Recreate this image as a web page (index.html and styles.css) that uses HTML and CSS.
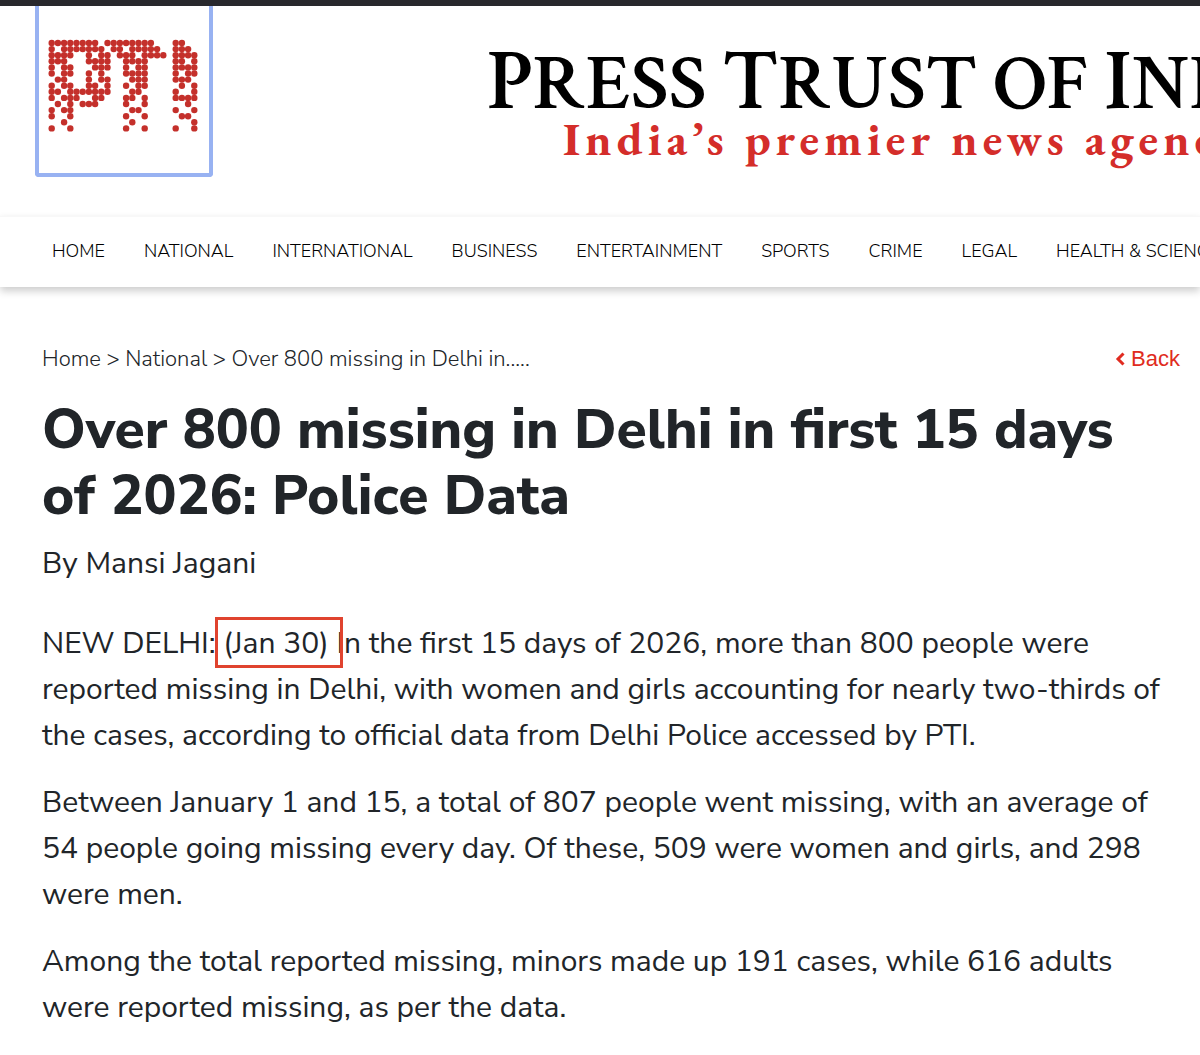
FILE: index.html
```html
<!DOCTYPE html>
<html lang="en">
<head>
    <meta charset="UTF-8">
    <meta name="viewport" content="width=device-width, initial-scale=1.0">
    <title>Over 800 missing in Delhi in first 15 days of 2026: Police Data</title>
    <link rel="stylesheet" href="styles.css">
</head>
<body>
    <header>
        <a href="#" class="logo" aria-label="PTI home">
            <svg id="logoDots" viewBox="0 0 150 94" width="150" height="94"></svg>
        </a>
        <div class="masthead">
            <div class="title"><span>P</span>RESS <span>T</span>RUST OF <span>I</span>NDIA</div>
            <div class="tagline">India’s premier news agency</div>
        </div>
    </header>

    <nav>
        <ul>
            <li><a href="#">HOME</a></li>
            <li><a href="#">NATIONAL</a></li>
            <li><a href="#">INTERNATIONAL</a></li>
            <li><a href="#">BUSINESS</a></li>
            <li><a href="#">ENTERTAINMENT</a></li>
            <li><a href="#">SPORTS</a></li>
            <li><a href="#">CRIME</a></li>
            <li><a href="#">LEGAL</a></li>
            <li><a href="#">HEALTH &amp; SCIENCE</a></li>
        </ul>
    </nav>

    <main>
        <div class="top-row">
            <div class="breadcrumb"><a href="#">Home</a> &gt; <a href="#">National</a> &gt; Over 800 missing in Delhi in.....</div>
            <a href="#" class="back">
                <svg viewBox="0 0 10 16" width="10" height="16"><path d="M8.5 2.5L3 8l5.5 5.5"/></svg>
                Back
            </a>
        </div>
        <article>
            <h1>Over 800 missing in Delhi in first 15 days of 2026: Police Data</h1>
            <div class="byline">By Mansi Jagani</div>
            <p>NEW DELHI: <span class="marked">(Jan 30)</span> In the first 15 days of 2026, more than 800 people were reported missing in Delhi, with women and girls accounting for nearly two-thirds of the cases, according to official data from Delhi Police accessed by PTI.</p>
            <p>Between January 1 and 15, a total of 807 people went missing, with an average of 54 people going missing every day. Of these, 509 were women and girls, and 298 were men.</p>
            <p>Among the total reported missing, minors made up 191 cases, while 616 adults were reported missing, as per the data.</p>
        </article>
    </main>

    <script>
        // each letter of the logo is a grid of dots, starting at its own column
        const letters = [
            { col: 0, rows: ['XXXXXXXX', 'X.XXXXXXX', 'XXXX..X.XX', 'XXX...XXXX', 'X.XX...XXX', 'X.XX..X.X', '.XX...X.XX', 'X.XX..XX.X', 'XX.XXXXXXX', 'X.XXX..XX', '.X.X.XXX', 'X.XX', 'X..X', '..X', 'X..X'] },
            { col: 9, rows: ['XXXXXXXX', '.XX.XXXXX', '..XXX.XXXX', '...XXXX', '...X.XX', '...XXXX', '....XXX', '...X.XX', '....XX', '...XX.X', '...X..X', '....XX', '...X..X', '....X', '...X..X'] },
            { col: 20, rows: ['XX', 'XXX', 'XXXX', 'XX.X', 'XXXX', 'X.XX', 'XXX', '.X.X', 'X..X', 'XXXX', '..X', 'X..X', '.XX', '...X', 'X..X'] }
        ];
        let dots = '';
        letters.forEach(letter => {
            letter.rows.forEach((row, y) => {
                [...row].forEach((c, x) => {
                    if (c === 'X') {
                        dots += `<circle cx="${3.7 + (letter.col + x) * 6.2}" cy="${4 + y * 6.1}" r="3.2"/>`;
                    }
                });
            });
        });
        document.getElementById('logoDots').innerHTML = dots;
    </script>
</body>
</html>
```
FILE: styles.css
```css
* {
    box-sizing: border-box;
}
body {
    background-color: #fff;
    color: #212529;
    font-family: "Nunito Sans", "Open Sans", sans-serif;
    font-weight: 400;
    margin: 0;
    border-top: 6px solid #28282c;
    overflow-x: hidden;
}
a {
    color: inherit;
    text-decoration: none;
}
header {
    display: flex;
    align-items: flex-start;
    height: 210px;
    padding-left: 35px;
    overflow: hidden;
}
.logo {
    flex: none;
    width: 178px;
    height: 171px;
    padding: 33px 10px 0 9px;
    border: 4px solid #98b2f2;
    border-top: none;
    border-radius: 0 0 4px 4px;
}
.logo svg {
    display: block;
    fill: #c4302b;
}
.masthead {
    margin-left: 274px;
    padding-top: 36px;
    white-space: nowrap;
}
.title {
    color: #000;
    font-family: "Crimson Text", "Liberation Serif", serif;
    font-size: 79px;
    font-weight: 600;
    line-height: 80px;
}
.title span {
    font-size: 86px;
}
.tagline {
    color: #d42d2a;
    font-family: "EB Garamond", "Liberation Serif", serif;
    font-size: 47px;
    font-weight: 700;
    line-height: 28px;
    letter-spacing: 5px;
    padding-left: 76px;
}
nav {
    border-top: 1px solid #f8f8f8;
    box-shadow: 0 4px 8px rgba(0, 0, 0, 0.2);
    overflow: hidden;
}
nav ul {
    display: flex;
    gap: 39px;
    list-style-type: none;
    margin: 0;
    padding: 0 52px;
}
nav li a {
    display: block;
    color: #000;
    font-size: 18px;
    font-weight: 300;
    line-height: 68px;
    padding-bottom: 2px;
    white-space: nowrap;
}
main {
    padding: 56px 20px 22px 42px;
}
.top-row {
    display: flex;
    justify-content: space-between;
    font-size: 22px;
    line-height: 32px;
}
.breadcrumb {
    font-weight: 300;
}
.back {
    display: flex;
    align-items: center;
    gap: 6px;
    color: #e02b20;
    font-family: "Liberation Sans", sans-serif;
}
.back svg {
    fill: none;
    stroke: #e02b20;
    stroke-width: 3;
}
article {
    padding-right: 20px;
    font-size: 30px;
    line-height: 46px;
}
h1 {
    margin: 22px 0 12px;
    font-size: 55px;
    font-weight: 800;
    line-height: 66px;
}
p {
    margin: 0 0 21px;
}
.byline {
    margin-bottom: 34px;
}
.marked {
    position: relative;
}
/* red annotation frame around the dateline */
.marked::after {
    content: "";
    position: absolute;
    top: -6px;
    left: -8px;
    right: -14px;
    height: 45px;
    border: 3px solid #e0432f;
}
```
